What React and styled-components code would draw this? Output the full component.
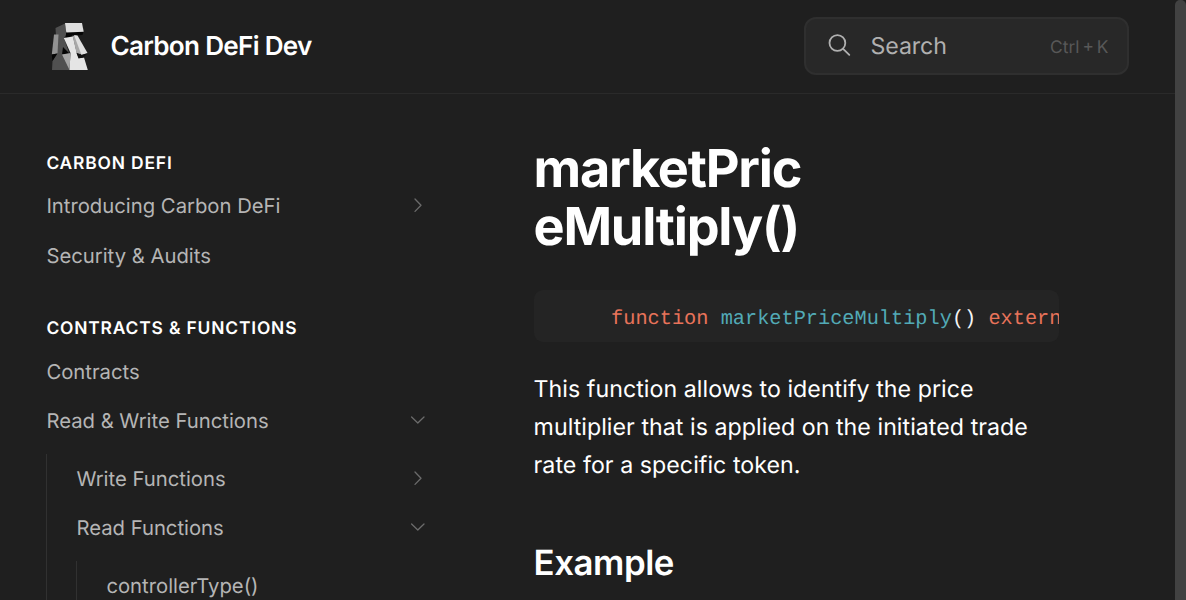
import React from "react";
import styled, { createGlobalStyle } from "styled-components";

const Global = createGlobalStyle`
  * { box-sizing: border-box; }
  html, body { margin: 0; background: #1f1f1f; overflow: hidden; }
  body { font-family: Inter, "Liberation Sans", sans-serif; color: #fff; text-rendering: geometricPrecision; }
`;

const Page = styled.div`
  display: flex;
  width: 1186px;
  height: 600px;
  overflow: hidden;
  background: #1f1f1f;
`;

const Main = styled.div`
  width: 1175px;
  height: 600px;
  overflow: hidden;
`;

const Scrollbar = styled.div`
  width: 11px;
  height: 600px;
  background: #424242;
  border-radius: 5px 5px 0 0;
`;

const Header = styled.header`
  display: flex;
  align-items: center;
  height: 94px;
  padding: 0 46px 2px 46px;
  border-bottom: 1px solid #2a2a2a;
`;

const Logo = styled.svg`
  width: 47px;
  height: 48px;
  flex: none;
`;

const Brand = styled.div`
  margin: 2px 0 0 17.4px;
  font-size: 26.1px;
  line-height: 36px;
  font-weight: 600;
  letter-spacing: -0.7px;
  white-space: nowrap;
`;

const SearchBox = styled.div`
  display: flex;
  align-items: center;
  width: 325px;
  height: 58px;
  margin-left: auto;
  padding: 0 18.5px 0 22px;
  background: #282828;
  border: 2px solid #2f2f2f;
  border-radius: 12px;
`;

const SearchIcon = styled.svg`
  width: 24px;
  height: 24px;
  flex: none;
  margin-top: -1px;
`;

const SearchLabel = styled.span`
  margin-left: 18.5px;
  font-size: 23.2px;
  letter-spacing: -0.1px;
  color: #b0b0b0;
`;

const Shortcut = styled.span`
  margin: 3px 0 0 auto;
  font-size: 17.4px;
  color: #585858;
  word-spacing: -2px;
`;

const Body = styled.div`
  display: flex;
`;

const Sidebar = styled.nav`
  width: 440px;
  padding: 51px 13px 0 46.4px;
`;

const SectionTitle = styled.h5`
  margin: ${(p) => (p.$spaced ? "29.85px" : "0")} 0 0;
  height: ${(p) => (p.$spaced ? "36.95px" : "36.15px")};
  font-size: 17.4px;
  line-height: 37px;
  font-weight: 600;
  letter-spacing: 0.84px;
  white-space: nowrap;
`;

const Item = styled.div`
  display: flex;
  align-items: center;
  justify-content: space-between;
  height: 49.3px;
  font-size: 20.3px;
  letter-spacing: -0.01px;
  color: #b5b5b5;
  white-space: nowrap;
`;

const Nested = styled.div`
  margin: 8.7px 0 0 -0.4px;
  padding-left: 29.4px;
  border-left: 1px solid #313131;
`;

const Chevron = styled.svg`
  width: 18px;
  height: 18px;
  margin-top: -1px;
  transform: rotate(${(p) => (p.$open ? "90deg" : "0deg")});
`;

const Content = styled.article`
  width: 525.5px;
  margin-left: 93.6px;
  padding-top: 45px;
`;

const Title = styled.h1`
  margin: 0;
  width: 290px;
  font-size: 52.2px;
  line-height: 58px;
  font-weight: 700;
  letter-spacing: -1.22px;
  overflow-wrap: anywhere;
`;

const Code = styled.pre`
  margin: 35px 0 0;
  height: 52.4px;
  padding-left: 77.5px;
  overflow: hidden;
  background: #242424;
  border-radius: 9px;
  font-family: "Liberation Mono", monospace;
  font-size: 20.3px;
  line-height: 59px;
  color: #f5f5f5;
`;

const Keyword = styled.span`
  color: #e8735a;
`;

const Name = styled.span`
  color: #52aab6;
`;

const Paragraph = styled.p`
  margin: 27.6px 0 0;
  font-size: 23.2px;
  line-height: 38px;
  letter-spacing: 0.04px;
`;

const Heading = styled.h2`
  margin: 53px 0 0;
  font-size: 34.8px;
  line-height: 52px;
  font-weight: 600;
  letter-spacing: -0.45px;
`;

function Arrow({ open }) {
  return (
    <Chevron $open={open} viewBox="0 0 18 18" fill="none" stroke="#6b6b6b" strokeWidth="1.3" strokeLinecap="round" strokeLinejoin="round">
      <path d="M6 3 L12 9.2 L6 15.4" />
    </Chevron>
  );
}

function NavItem({ label, arrow, open }) {
  return (
    <Item>
      <span>{label}</span>
      {arrow && <Arrow open={open} />}
    </Item>
  );
}

export default function App() {
  return (
    <Page>
      <Global />
      <Main>
        <Header>
          <Logo viewBox="0 0 47 48">
            <path d="M9.500 6L19 1.500L20.500 12L18 16L23 31L24 48H6L6.500 39L11 31Z" fill="#505050" />
            <path d="M8 12.500H12.500L11.500 31.500L5.800 32.500Z" fill="#929292" />
            <path d="M17 25L23.500 31.500L16 32.500Z M5.800 32.500L11.500 31.500L6.500 39Z M20 9.800L37.500 9.500L36.500 13L28 13.500L20 16Z" fill="#050505" />
            <path d="M19 1H36L37.700 9.700L20.300 10.500Z" fill="#dedede" />
            <path d="M17.800 16L27 14.500L31 32L33 36L38 35.500L41.800 48H23.500L24.500 31Z" fill="#e5e5e5" />
            <path d="M16 32.500L24.500 31L23.500 48Z" fill="#a5a5a5" />
            <path d="M26.500 13.500L30 14.500L36 32.500L30.500 31Z" fill="#a8a8a8" />
            <path d="M28 13L31.500 13.500L41.500 31L35.500 33Z" fill="#dfdfdf" />
            <path d="M30.500 31L35.500 33L41 31.500L37.500 35.500L32.500 36.500Z" fill="#111" />
          </Logo>
          <Brand>Carbon DeFi Dev</Brand>
          <SearchBox>
            <SearchIcon viewBox="0 0 24 24" fill="none" stroke="#b0b0b0" strokeWidth="1.8" strokeLinecap="round">
              <circle cx="9.400" cy="10" r="7.900" />
              <path d="M15.100 15.800L21.300 21.800" />
            </SearchIcon>
            <SearchLabel>Search</SearchLabel>
            <Shortcut>Ctrl + K</Shortcut>
          </SearchBox>
        </Header>
        <Body>
          <Sidebar>
            <SectionTitle>CARBON DEFI</SectionTitle>
            <NavItem label="Introducing Carbon DeFi" arrow />
            <NavItem label="Security & Audits" />
            <SectionTitle $spaced>CONTRACTS &amp; FUNCTIONS</SectionTitle>
            <NavItem label="Contracts" />
            <NavItem label="Read & Write Functions" arrow open />
            <Nested>
              <NavItem label="Write Functions" arrow />
              <NavItem label="Read Functions" arrow open />
              <Nested>
                <NavItem label="controllerType()" />
              </Nested>
            </Nested>
          </Sidebar>
          <Content>
            <Title>marketPriceMultiply()</Title>
            <Code>
              <Keyword>function</Keyword> <Name>marketPriceMultiply</Name>() <Keyword>external</Keyword>
            </Code>
            <Paragraph>
              This function allows to identify the price multiplier that is applied on the initiated trade rate for a specific token.
            </Paragraph>
            <Heading>Example</Heading>
          </Content>
        </Body>
      </Main>
      <Scrollbar />
    </Page>
  );
}
